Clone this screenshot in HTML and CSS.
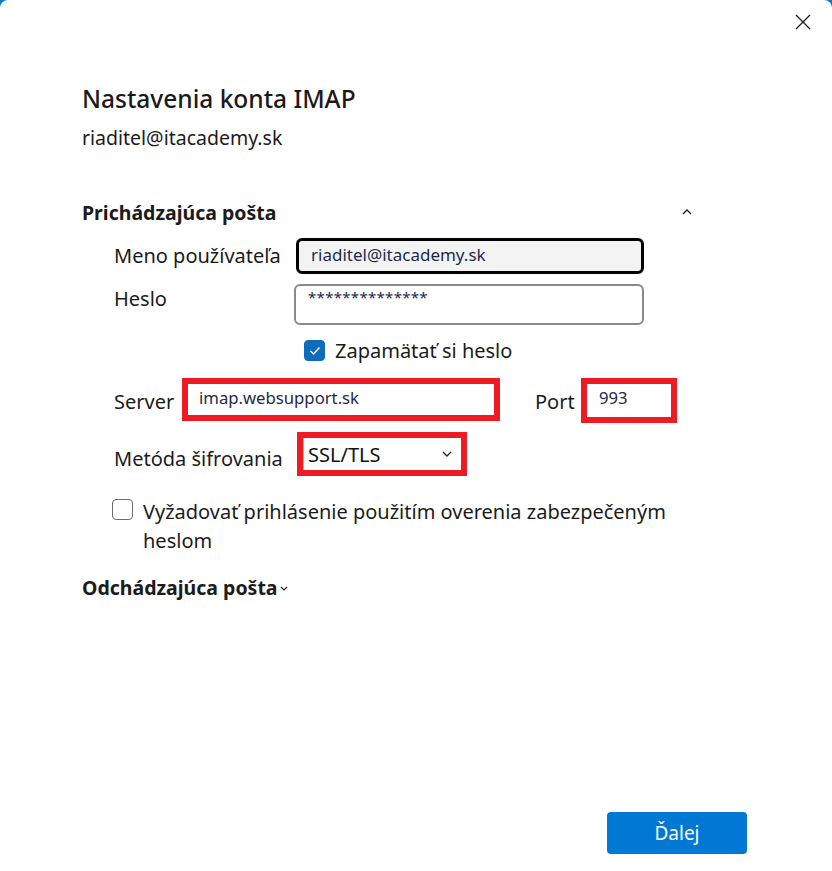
FILE: index.html
```html
<!DOCTYPE html>
<html lang="sk">
<head>
<meta charset="utf-8">
<title>Nastavenia konta IMAP</title>
<link rel="stylesheet" href="styles.css">
</head>
<body>
<div class="dialog">
  <button class="close" aria-label="Zavrieť">
    <svg width="16" height="16" viewBox="0 0 16 16"><path d="M1 1 L15 15 M15 1 L1 15" stroke="#1a1a1a" stroke-width="1.3" fill="none"/></svg>
  </button>
  <h1 class="title">Nastavenia konta IMAP</h1>
  <div class="account">riaditel@itacademy.sk</div>

  <div class="section-head">
    <span class="section-title">Prichádzajúca pošta</span>
    <svg class="caret-up" width="10" height="6" viewBox="0 0 10 6"><path d="M1 5 L5 1 L9 5" stroke="#222" stroke-width="1.3" fill="none"/></svg>
  </div>

  <div class="row row-user">
    <span class="label">Meno používateľa</span>
    <div class="input input-focus">riaditel@itacademy.sk</div>
  </div>
  <div class="row row-pass">
    <span class="label">Heslo</span>
    <div class="input input-pass">**************</div>
  </div>
  <div class="row row-remember">
    <span class="check checked">
      <svg width="12" height="10" viewBox="0 0 12 10"><path d="M1.5 5 L4.5 8 L10.5 1.5" stroke="#fff" stroke-width="1.4" fill="none"/></svg>
    </span>
    <span class="check-text">Zapamätať si heslo</span>
  </div>

  <div class="row row-server">
    <span class="label server-label">Server</span>
    <div class="hl hl-server"><div class="field">imap.websupport.sk</div></div>
    <span class="label port-label">Port</span>
    <div class="hl hl-port"><div class="field">993</div></div>
  </div>

  <div class="row row-method">
    <span class="label method-label">Metóda šifrovania</span>
    <div class="hl hl-method">
      <div class="select">
        <span>SSL/TLS</span>
        <svg width="10" height="6" viewBox="0 0 10 6"><path d="M1 1 L5 5 L9 1" stroke="#222" stroke-width="1.3" fill="none"/></svg>
      </div>
    </div>
  </div>

  <div class="row row-spa">
    <span class="check"></span>
    <span class="check-text spa-text">Vyžadovať prihlásenie použitím overenia zabezpečeným heslom</span>
  </div>

  <div class="section-head out">
    <span class="section-title">Odchádzajúca pošta</span>
    <svg class="caret-down" width="8" height="5" viewBox="0 0 8 5"><path d="M1 1 L4 4 L7 1" stroke="#222" stroke-width="1.2" fill="none"/></svg>
  </div>

  <div class="footer">
    <button class="next">Ďalej</button>
  </div>
</div>
</body>
</html>
```

FILE: styles.css
```css
* { box-sizing: border-box; }
html, body { margin: 0; padding: 0; }
body {
  background: #0078d4;
  font-family: "Noto Sans", "Open Sans", sans-serif;
  color: #1b1b1b;
}
.dialog {
  position: relative;
  width: 832px;
  height: 871px;
  background: #fff;
  border-radius: 8px 8px 0 0;
  padding: 82px 0 0 82px;
  display: flex;
  flex-direction: column;
}
.close {
  position: absolute;
  top: 14px;
  right: 21px;
  border: 0;
  background: transparent;
  padding: 0;
  width: 16px;
  height: 16px;
  display: flex;
}
.title {
  margin: 0;
  font-size: 24.5px;
  font-weight: 500;
  line-height: 34px;
  color: #1a1a1a;
}
.account {
  margin-top: 9px;
  font-size: 19.5px;
  line-height: 26px;
}
.section-head {
  display: flex;
  align-items: center;
  margin-top: 46px;
  width: 610px;
  height: 30px;
}
.section-title {
  font-size: 19.5px;
  font-weight: 700;
}
.caret-up { margin-left: auto; margin-top: 0; }
.row {
  display: flex;
  align-items: center;
  padding-left: 32px;
}
.label {
  font-size: 20px;
  line-height: 26px;
}
.row-user { margin-top: 11px; }
.row-user .label { width: 180px; }
.input {
  width: 350px;
  border-radius: 6px;
  font-size: 17px;
  color: #1e2a4a;
}
.input-focus {
  height: 36px;
  border: 3px solid #000;
  background: #f3f3f3;
  padding: 2px 0 0 12px;
  margin-left: 2px;
  width: 348px;
}
.row-pass { margin-top: 10px; align-items: flex-start; }
.row-pass .label { width: 180px; padding-top: 2px; }
.input-pass {
  height: 41px;
  border: 2px solid #8a8a8a;
  padding: 1px 0 0 12px;
  font-size: 15px;
  letter-spacing: 0.3px;
}
.row-remember { margin-top: 11px; padding-left: 222px; }
.check {
  width: 21px;
  height: 21px;
  border: 1.5px solid #6e6e6e;
  border-radius: 4px;
  display: flex;
  align-items: center;
  justify-content: center;
  flex: none;
}
.check.checked { background: #0f6cbd; border-color: #0f6cbd; }
.check-text { font-size: 20px; line-height: 29px; margin-left: 10px; }

.row-server { margin-top: 13px; align-items: flex-start; }
.server-label { width: 68px; padding-top: 11px; }
.hl {
  border: 6px solid #ed1c24;
  background: #fff;
}
.hl-server { width: 318px; height: 43px; }
.field {
  height: 100%;
  padding: 0 0 0 11px;
  font-size: 16.7px;
  line-height: 28px;
  color: #1e2a4a;
}
.port-label { margin-left: 35px; width: 46px; padding-top: 11px; }
.hl-port { width: 96px; height: 45px; }
.hl-port .field { padding-left: 12px; }

.row-method { margin-top: 9px; align-items: flex-start; }
.method-label { width: 183px; padding-top: 14px; }
.hl-method { width: 170px; height: 44px; }
.select {
  height: 100%;
  border-left: 1px solid #bdbdbd;
  display: flex;
  align-items: center;
  padding: 0 9px 0 4px;
  font-size: 20px;
  color: #111;
}
.select span { flex: 1; }

.row-spa { margin-top: 21px; padding-left: 30px; align-items: flex-start; }
.row-spa .check { margin-top: 2px; }
.spa-text { width: 532px; }

.section-head.out { margin-top: 17px; width: auto; }
.caret-down { margin-left: 2px; margin-top: 2px; }

.footer {
  margin-top: auto;
  padding: 0 85px 17px 0;
  display: flex;
  justify-content: flex-end;
}
.next {
  width: 140px;
  height: 42px;
  background: #0078d4;
  color: #fff;
  border: 0;
  border-radius: 4px;
  font-family: inherit;
  font-size: 19px;
}
```
